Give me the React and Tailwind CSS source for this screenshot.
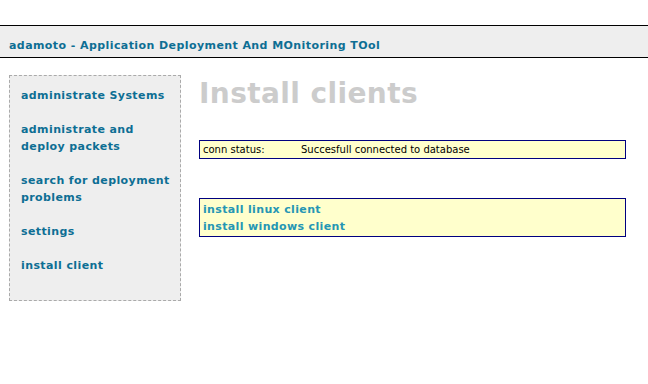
export default function App() {
  return (
    <div className="min-h-[384px] bg-white pt-[25px] font-['DejaVu_Sans',Verdana,sans-serif]">
      <header className="flex h-[33px] items-end border-y border-black bg-[#eeeeee] px-[9px] pb-[3px]">
        <h1 className="text-[11px] font-bold tracking-[0.42px] text-[#0d6e94]">
          adamoto - Application Deployment And MOnitoring TOol
        </h1>
      </header>
      <div className="flex items-start gap-[18px] px-[9px] pt-[17px]">
        <nav className="flex h-[226px] w-[172px] flex-col gap-[17px] border border-dashed border-[#aaaaaa] bg-[#eeeeee] pt-[11px] pr-[2px] pl-[11px] text-[11px] leading-[17px] font-bold tracking-[0.4px] text-[#0d6e94]">
          <a>administrate Systems</a>
          <a className="w-[130px]">administrate and deploy packets</a>
          <a>search for deployment problems</a>
          <a>settings</a>
          <a>install client</a>
        </nav>
        <main className="flex w-[427px] flex-col">
          <h2 className="mt-[2px] text-[28px] leading-[34px] font-bold tracking-[0.4px] text-[#cccccc]">
            Install clients
          </h2>
          <div className="mt-[29px] flex h-[19px] items-center border border-[#000080] bg-[#ffffcc] px-[3px] text-[10px] text-black">
            <span className="w-[98px]">conn status:</span>
            <span>Succesfull connected to database</span>
          </div>
          <div className="mt-[39px] flex flex-col border border-[#000080] bg-[#ffffcc] px-[3px] pt-[2px] pb-[1px] text-[11px] leading-[17px] font-bold tracking-[0.35px] text-[#2596b4]">
            <a>install linux client</a>
            <a>install windows client</a>
          </div>
        </main>
      </div>
    </div>
  );
}
